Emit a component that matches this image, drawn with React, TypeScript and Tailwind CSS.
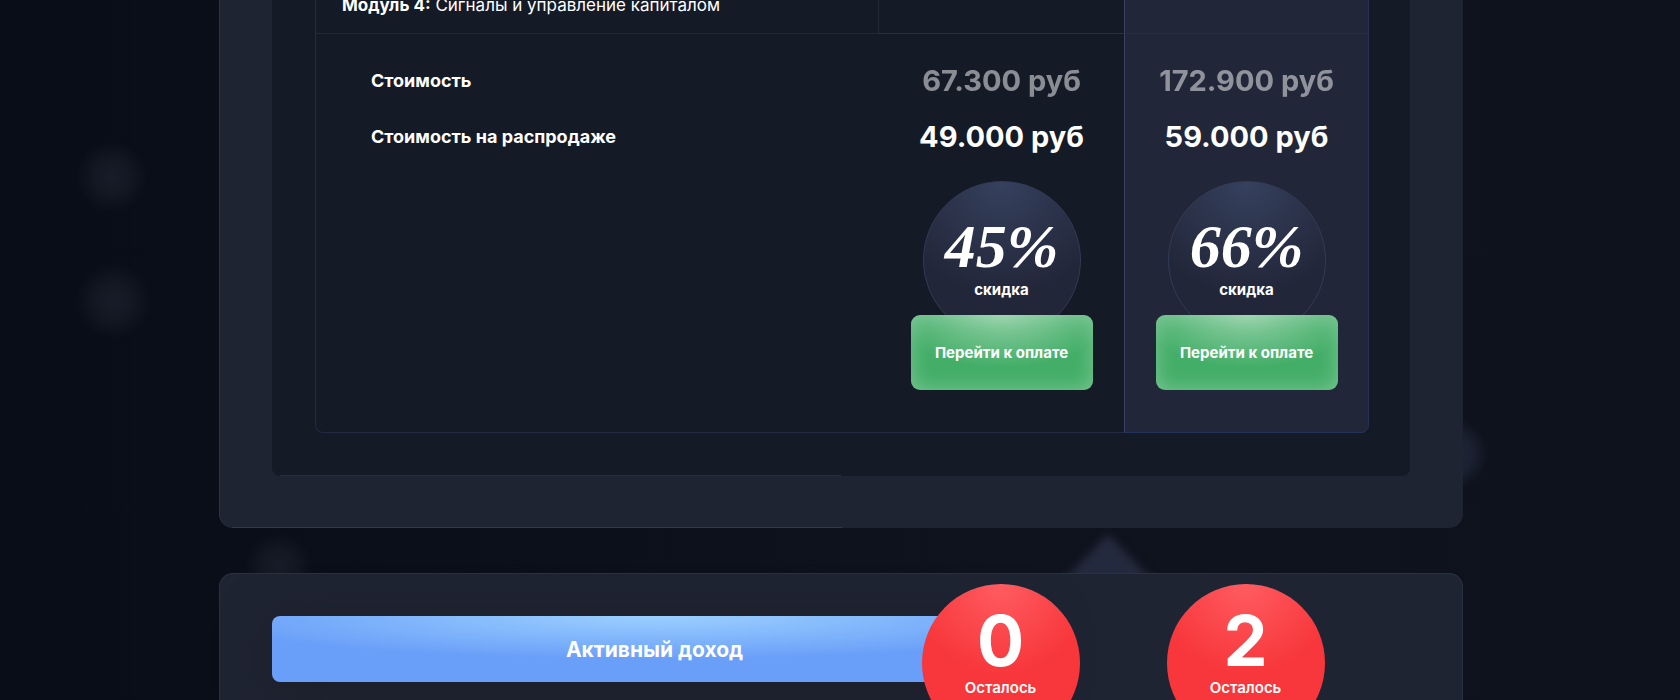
import React from "react";

interface Plan {
  id: string;
  oldPrice: string;
  price: string;
  discount: string;
  left: number;
  featured: boolean;
}

const plans: Plan[] = [
  { id: "basic", oldPrice: "67.300 руб", price: "49.000 руб", discount: "45%", left: 0, featured: false },
  { id: "pro", oldPrice: "172.900 руб", price: "59.000 руб", discount: "66%", left: 2, featured: true },
];

const columnStyle = (featured: boolean) =>
  featured ? "bg-[#222639] border-x border-l-[#38406c] border-r-[#262f55]" : "";

const offerStyle = (featured: boolean) =>
  featured ? "border-b border-b-[#27325c] rounded-br-lg" : "border-b border-b-[#232a42]";

function Backdrop() {
  return (
    <svg className="absolute inset-0 w-full h-full" viewBox="0 0 1680 700" preserveAspectRatio="xMidYMin slice" aria-hidden="true">
      <defs>
        <radialGradient id="coin">
          <stop offset="0%" stopColor="#171c29" />
          <stop offset="45%" stopColor="#131823" />
          <stop offset="100%" stopColor="#131823" stopOpacity="0" />
        </radialGradient>
        <radialGradient id="coinBright">
          <stop offset="0%" stopColor="#1f2536" />
          <stop offset="55%" stopColor="#1b2130" />
          <stop offset="100%" stopColor="#1b2130" stopOpacity="0" />
        </radialGradient>
        <filter id="soft" x="-50%" y="-50%" width="200%" height="200%" colorInterpolationFilters="sRGB">
          <feGaussianBlur stdDeviation="4" />
        </filter>
      </defs>
      <circle cx="112" cy="177" r="36" fill="url(#coin)" />
      <circle cx="114" cy="301" r="38" fill="url(#coin)" />
      <circle cx="279" cy="567" r="34" fill="url(#coin)" />
      <circle cx="1452" cy="454" r="36" fill="url(#coinBright)" />
      <path d="M1108 534 L1060 584 L1156 584 Z" fill="#242a3d" filter="url(#soft)" />
    </svg>
  );
}

function DiscountOffer({ discount }: { discount: string }) {
  return (
    <div className="flex flex-col items-center pt-4 pb-[42px]">
      <div className="flex flex-col items-center w-[158px] h-[158px] rounded-full border border-[#323a55] bg-[radial-gradient(circle_at_50%_0%,#36415e_0%,#222639_65%)] pt-[30px]">
        <span className="font-['Liberation_Serif',serif] font-bold italic text-[62px] leading-[68px]">{discount}</span>
        <span className="text-[15px] leading-5 font-bold">скидка</span>
      </div>
      <button
        type="button"
        className="relative -mt-6 w-[182px] h-[75px] rounded-[9px] pt-0.5 text-[15px] font-bold bg-[radial-gradient(ellipse_60%_70%_at_50%_0%,#8fcfa4_0%,#43ae68_100%)] shadow-[inset_0_0_20px_rgba(255,255,255,0.3)]"
      >
        Перейти к оплате
      </button>
    </div>
  );
}

function PriceTable() {
  return (
    <table className="w-full table-fixed border-separate border-spacing-0">
      <colgroup>
        <col />
        <col className="w-[245px]" />
        <col className="w-[245px]" />
      </colgroup>
      <tbody>
        <tr>
          <th scope="row" className="pl-[26px] pb-[14px] text-left font-normal text-[17px] leading-7 border-x border-b border-b-[#232836] border-r-[#232836] border-l-[#232a42]">
            <strong className="font-bold">Модуль 4:</strong> Сигналы и управление капиталом
          </th>
          {plans.map((plan) => (
            <td key={plan.id} className={`border-b border-b-[#292e3e] ${columnStyle(plan.featured)}`} />
          ))}
        </tr>
        <tr>
          <th scope="row" className="pt-[19px] pl-[55px] h-[75px] text-left text-lg leading-7 font-bold border-l border-[#232a42]">Стоимость</th>
          {plans.map((plan) => (
            <td key={plan.id} className={`pt-[19px] text-center text-[29px] leading-9 font-bold ${columnStyle(plan.featured)}`}>
              <span className="opacity-50">{plan.oldPrice}</span>
            </td>
          ))}
        </tr>
        <tr>
          <th scope="row" className="pl-[55px] h-14 text-left text-lg leading-7 font-bold border-l border-[#232a42]">Стоимость на распродаже</th>
          {plans.map((plan) => (
            <td key={plan.id} className={`text-center text-[29px] leading-9 font-bold ${columnStyle(plan.featured)}`}>
              {plan.price}
            </td>
          ))}
        </tr>
        <tr>
          <td className="border-l border-b border-[#232a42] rounded-bl-lg" />
          {plans.map((plan) => (
            <td key={plan.id} className={`${columnStyle(plan.featured)} ${offerStyle(plan.featured)}`}>
              <DiscountOffer discount={plan.discount} />
            </td>
          ))}
        </tr>
      </tbody>
    </table>
  );
}

export default function App() {
  return (
    <div className="relative h-screen overflow-hidden bg-[linear-gradient(90deg,#080d18_0%,#0a0f1a_25%,#0f131e_60%,#0d121d_100%)] text-white font-['Inter',sans-serif]">
      <Backdrop />
      <main className="relative max-w-[1246px] mx-auto pl-[2px] -mt-[9px]">
        {/* Pricing card */}
        <section className="relative rounded-b-[14px] border-l border-[#2b3347] bg-[#1f2433] pl-[52px] pr-[53px] pb-[52px]">
          <div className="relative rounded-b-lg bg-[#151a27] pl-[43px] pr-[41px] pb-[43px]">
            <PriceTable />
            <div className="absolute bottom-0 left-2 right-1/2 h-px bg-[#262c3f]" />
          </div>
          <div className="absolute bottom-0 left-3 right-1/2 h-px bg-[#333a50]" />
        </section>

        {/* Active income card */}
        <section className="mt-[45px] grid grid-cols-[1fr_245px_245px] rounded-t-[14px] border border-b-0 border-[#2a3140] bg-[#1f2433] pt-2.5 pb-16 pl-[52px] pr-[94px]">
          <h2 className="col-start-1 col-span-2 row-start-1 self-start mt-8 mr-[86px] h-[66px] pt-0.5 flex items-center justify-center rounded-lg text-[21px] font-bold bg-[radial-gradient(ellipse_60%_65%_at_50%_0%,#9bd0ff_0%,#6a9ff9_100%)] shadow-[0_8px_50px_rgba(28,28,34,0.7)]">
            Активный доход
          </h2>
          {plans.map((plan) => (
            <div
              key={plan.id}
              className={`${plan.featured ? "col-start-3" : "col-start-2"} row-start-1 z-10 justify-self-center flex flex-col items-center w-[158px] h-[158px] rounded-full pt-5 bg-[radial-gradient(circle_90px_at_50%_0%,#ff5c61_0%,#f7373b_100%)]`}
            >
              <span className="text-[70px] leading-[74px] font-bold">{plan.left}</span>
              <span className="text-[15px] leading-5 font-semibold">Осталось</span>
            </div>
          ))}
        </section>
      </main>
    </div>
  );
}
